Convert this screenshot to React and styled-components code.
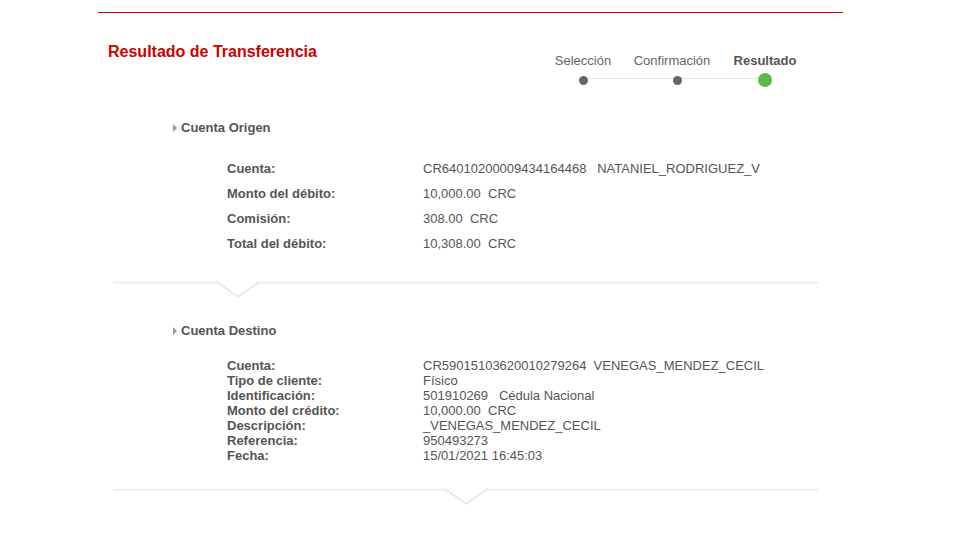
import React from 'react';
import styled, {createGlobalStyle} from 'styled-components';

const GlobalStyle = createGlobalStyle`
  body {
    margin: 0;
    background: #fff;
    font-family: "Liberation Sans", Arial, sans-serif;
  }
`;

const STEPS = [
  {label: 'Selección', done: true},
  {label: 'Confirmación', done: true, shift: -5},
  {label: 'Resultado', current: true},
];

const ORIGEN = [
  ['Cuenta:', 'CR64010200009434164468   NATANIEL_RODRIGUEZ_V'],
  ['Monto del débito:', '10,000.00  CRC'],
  ['Comisión:', '308.00  CRC'],
  ['Total del débito:', '10,308.00  CRC'],
];

const DESTINO = [
  ['Cuenta:', 'CR59015103620010279264  VENEGAS_MENDEZ_CECIL'],
  ['Tipo de cliente:', 'Físico'],
  ['Identificación:', '501910269   Cédula Nacional'],
  ['Monto del crédito:', '10,000.00  CRC'],
  ['Descripción:', '_VENEGAS_MENDEZ_CECIL'],
  ['Referencia:', '950493273'],
  ['Fecha:', '15/01/2021 16:45:03'],
];

function App() {
  return (
    <>
      <GlobalStyle />
      <Page>
        <TopRule />
        <Header>
          <Title>Resultado de Transferencia</Title>
          <Stepper>
            <StepLine />
            {STEPS.map((s) => (
              <Step key={s.label} $current={s.current}>
                <StepLabel $shift={s.shift || 0}>{s.label}</StepLabel>
                <Dot $current={s.current} />
              </Step>
            ))}
          </Stepper>
        </Header>

        <Card $notch={124} $gap={0}>
          <SectionTitle>Cuenta Origen</SectionTitle>
          <Rows $lh={25}>
            {ORIGEN.map(([k, v]) => (
              <React.Fragment key={k}>
                <dt>{k}</dt>
                <dd>{v}</dd>
              </React.Fragment>
            ))}
          </Rows>
        </Card>

        <Card $notch={352} $gap={20}>
          <SectionTitle>Cuenta Destino</SectionTitle>
          <Rows $lh={15} $top={19}>
            {DESTINO.map(([k, v]) => (
              <React.Fragment key={k}>
                <dt>{k}</dt>
                <dd>{v}</dd>
              </React.Fragment>
            ))}
          </Rows>
        </Card>
      </Page>
    </>
  );
}

const Page = styled.div`
  width: 745px;
  margin-left: 98px;
  padding: 12px 0 40px;
`;

const TopRule = styled.div`
  height: 1px;
  background: #cc0000;
`;

const Header = styled.div`
  display: flex;
  justify-content: space-between;
  align-items: flex-start;
  height: 87px;
`;

const Title = styled.h2`
  margin: 30px 0 0 10px;
  font-size: 16px;
  line-height: 18px;
  font-weight: bold;
  color: #cc0000;
`;

const Stepper = styled.div`
  position: relative;
  display: grid;
  grid-template-columns: 92px 96px 80px;
  margin: 40px 38px 0 0;
`;

const StepLine = styled.div`
  position: absolute;
  left: 46px;
  right: 40px;
  top: 25px;
  height: 1px;
  background: #e6e6e6;
`;

const Step = styled.div`
  position: relative;
  display: flex;
  flex-direction: column;
  align-items: center;
  gap: 5px;
  font-size: 13px;
  line-height: 15px;
  color: ${(p) => (p.$current ? '#555' : '#666')};
  font-weight: ${(p) => (p.$current ? 'bold' : 'normal')};
  white-space: nowrap;
`;

const StepLabel = styled.span`
  position: relative;
  left: ${(p) => p.$shift}px;
`;

const Dot = styled.span`
  width: ${(p) => (p.$current ? 14 : 9)}px;
  height: ${(p) => (p.$current ? 14 : 9)}px;
  margin-top: ${(p) => (p.$current ? 0 : 2.5)}px;
  border-radius: 50%;
  background: ${(p) => (p.$current ? '#5bb947' : '#666')};
`;

const Card = styled.div`
  position: relative;
  margin: ${(p) => p.$gap}px 25px 0 15px;
  padding: 20px 0 26px 60px;
  background: #fff;
  border-bottom: 1px solid #e6e6e6;
  box-shadow: 0 2px 2px -1px rgba(0, 0, 0, 0.05);

  &::after {
    content: '';
    position: absolute;
    z-index: 1;
    left: ${(p) => p.$notch - 15}px;
    bottom: -16px;
    width: 30px;
    height: 30px;
    background: #fff;
    border-right: 2px solid #e6e6e6;
    border-bottom: 2px solid #e6e6e6;
    transform: scaleY(0.7) rotate(45deg);
  }
`;

const SectionTitle = styled.h4`
  margin: 0;
  font-size: 13px;
  line-height: 16px;
  font-weight: bold;
  color: #555;
  display: flex;
  align-items: center;

  &::before {
    content: '';
    width: 0;
    height: 0;
    margin-right: 4px;
    border-top: 4px solid transparent;
    border-bottom: 4px solid transparent;
    border-left: 4px solid #999;
  }
`;

const Rows = styled.dl`
  display: grid;
  grid-template-columns: 196px auto;
  margin: ${(p) => p.$top || 20}px 0 0 54px;
  font-size: 13px;
  line-height: ${(p) => p.$lh}px;
  color: #555;

  dt {
    font-weight: bold;
  }
  dd {
    margin: 0;
    white-space: pre;
  }
`;

export default App;
